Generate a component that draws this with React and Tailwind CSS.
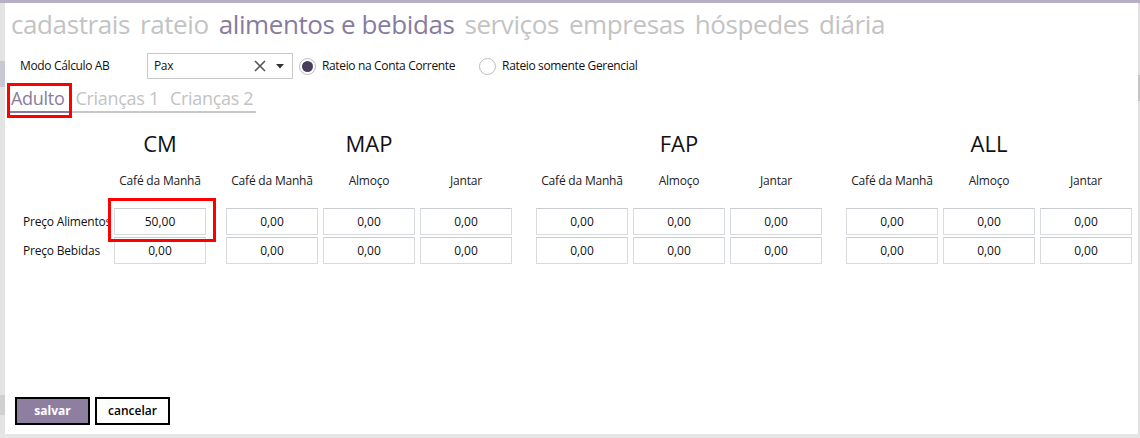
import React from "react";

const font = { fontFamily: '"Open Sans", "Noto Sans", sans-serif' };

function Input({ value }) {
  return (
    <div className="w-[92px] h-[27px] border border-[#d7dadf] border-t-[#c9ccd1] bg-white flex items-center justify-center text-[12px] text-[#111]">
      {value}
    </div>
  );
}

function Group({ title, cols, width, rows }) {
  return (
    <div className="flex flex-col" style={{ width }}>
      <div className="h-[34px] flex items-center justify-center text-[22px] text-[#111]">{title}</div>
      <div className="flex gap-[5px] mt-[12px] h-[17px]">
        {cols.map((c, i) => (
          <div key={i} className="w-[92px] text-center text-[12px] leading-[17px] tracking-[-0.2px] text-[#222]">{c}</div>
        ))}
      </div>
      <div className="flex flex-col gap-[2px] mt-[19px]">
        {rows.map((r, ri) => (
          <div key={ri} className="flex gap-[5px]">
            {r.map((v, i) => (
              <Input key={i} value={v} />
            ))}
          </div>
        ))}
      </div>
    </div>
  );
}

export default function App() {
  const z3 = [["0,00", "0,00", "0,00"], ["0,00", "0,00", "0,00"]];
  const cols3 = ["Café da Manhã", "Almoço", "Jantar"];
  return (
    <div className="w-[1140px] h-[438px] bg-[#e6e6e6] relative overflow-hidden" style={font}>
      <div className="h-[3px] bg-[#b7b0c3]" />
      <div className="flex h-[431px]">
        <div className="w-[5px] bg-[#e3e3e3] relative">
          <div className="absolute left-0 top-[58px] w-[5px] h-[26px] bg-[#c8c8d4]" />
          <div className="absolute left-0 top-[392px] w-[5px] h-[20px] bg-[#d0d0d0]" />
        </div>
        <div className="flex-1 bg-white relative">
          {/* top tabs */}
          <div className="flex gap-[10px] pl-[6px] pt-[4px] text-[26px] leading-[34px] tracking-[-0.4px]">
            <span className="text-[#c3c3c3]">cadastrais</span>
            <span className="text-[#c3c3c3]">rateio</span>
            <span className="text-[#887c9e]">alimentos e bebidas</span>
            <span className="text-[#c3c3c3]">serviços</span>
            <span className="text-[#c3c3c3]">empresas</span>
            <span className="text-[#c3c3c3]">hóspedes</span>
            <span className="text-[#c3c3c3]">diária</span>
          </div>

          {/* modo row */}
          <div className="flex items-center mt-[12px] h-[26px] text-[12px] tracking-[-0.35px] text-[#111]">
            <span className="pl-[15px] w-[142px]">Modo Cálculo AB</span>
            <div className="w-[146px] h-[26px] border border-[#c9c9c9] flex items-center pl-[6px] pr-[8px]">
              <span className="flex-1">Pax</span>
              <svg width="12" height="12" viewBox="0 0 12 12" className="mr-[10px]">
                <path d="M1 1L11 11M11 1L1 11" stroke="#555" strokeWidth="1.6" />
              </svg>
              <svg width="8" height="5" viewBox="0 0 8 5">
                <path d="M0 0H8L4 4.5Z" fill="#333" />
              </svg>
            </div>
            <div className="ml-[6px] w-[17px] h-[17px] rounded-full border border-[#bdbdbd] flex items-center justify-center">
              <div className="w-[11px] h-[11px] rounded-full bg-[#4b3d5e]" />
            </div>
            <span className="ml-[6px]">Rateio na Conta Corrente</span>
            <div className="ml-[24px] w-[17px] h-[17px] rounded-full border border-[#bdbdbd]" />
            <span className="ml-[6px]">Rateio somente Gerencial</span>
          </div>

          {/* sub tabs */}
          <div className="relative mt-[4px] ml-[3px] w-[248px] h-[30px] border-b-2 border-[#c8c8c8]">
            <div className="flex gap-[11px] pl-[3px] pt-[2px] text-[18px] leading-[26px] tracking-[-0.3px]">
              <span className="text-[#887c9e]">Adulto</span>
              <span className="text-[#c3c3c3]">Crianças 1</span>
              <span className="text-[#c3c3c3]">Crianças 2</span>
            </div>
            <div className="absolute left-0 bottom-[-2px] w-[62px] h-[2px] bg-[#887c9e]" />
            <div className="absolute left-[-1px] top-0 w-[65px] h-[35px] border-[3px] border-[#ff0000]" />
          </div>

          {/* table */}
          <div className="flex mt-[13px]">
            <div className="w-[109px] flex flex-col pl-[18px] text-[12px] tracking-[-0.2px] text-[#111]">
              <div className="h-[34px]" />
              <div className="h-[17px] mt-[12px]" />
              <div className="mt-[19px] h-[27px] flex items-center">Preço Alimentos</div>
              <div className="mt-[2px] h-[27px] flex items-center">Preço Bebidas</div>
            </div>
            <div className="relative">
              <Group title="CM" cols={["Café da Manhã"]} width={92} rows={[["50,00"], ["0,00"]]} />
              <div className="absolute left-[-6px] top-[72px] w-[108px] h-[44px] border-[3px] border-[#ff0000]" />
            </div>
            <div className="ml-[20px]">
              <Group title="MAP" cols={cols3} width={286} rows={z3} />
            </div>
            <div className="ml-[24px]">
              <Group title="FAP" cols={cols3} width={286} rows={z3} />
            </div>
            <div className="ml-[24px]">
              <Group title="ALL" cols={cols3} width={286} rows={z3} />
            </div>
          </div>

          {/* buttons */}
          <div className="absolute left-[10px] top-[394px] flex gap-[5px]">
            <button className="w-[75px] h-[28px] border-2 border-black bg-[#8e7fa1] text-white text-[12px] font-bold">salvar</button>
            <button className="w-[75px] h-[28px] border-2 border-black bg-white text-black text-[12px] font-semibold">cancelar</button>
          </div>

          <div className="absolute right-0 top-0 w-[2px] h-full bg-[#e0e0e0]" />
          <div className="absolute right-0 top-[72px] w-[2px] h-[26px] bg-[#c4c4c4]" />
        </div>
      </div>
    </div>
  );
}
